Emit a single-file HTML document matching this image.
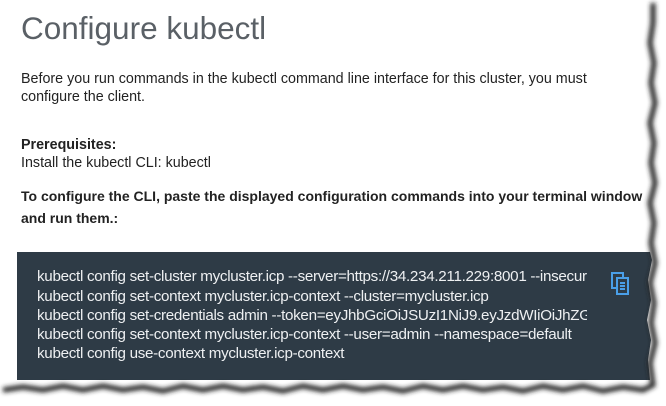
<!DOCTYPE html>
<html><head><style>
body{margin:0;width:666px;height:406px;background:#fff;position:relative;overflow:hidden;font-family:"Liberation Sans",sans-serif;}
.t{position:absolute;white-space:nowrap;color:#222;font-size:14.3px;}
h1{position:absolute;left:21px;top:10px;margin:0;font-weight:300;font-size:31.5px;color:#5a6066;}
.code{position:absolute;left:17px;top:252px;width:640px;height:128px;background:#2e3b46;}
.code div{position:absolute;left:20px;color:#eef0f2;font-size:15.2px;white-space:nowrap;letter-spacing:-0.3px;width:550px;overflow:hidden;}
</style></head><body>
<h1>Configure kubectl</h1>
<div class="t" style="left:21px;top:71px">Before you run commands in the kubectl command line interface for this cluster, you must</div>
<div class="t" style="left:21px;top:89px">configure the client.</div>
<div class="t" style="left:21px;top:137px;font-weight:bold">Prerequisites:</div>
<div class="t" style="left:21px;top:155px">Install the kubectl CLI: kubectl</div>
<div class="t" style="left:21px;top:188px;font-weight:bold;font-size:14px">To configure the CLI, paste the displayed configuration commands into your terminal window</div>
<div class="t" style="left:21px;top:210px;font-weight:bold;font-size:14px">and run them.:</div>
<div class="code">
<div style="top:16px">kubectl config set-cluster mycluster.icp --server=https://34.234.211.229:8001 --insecure-skip-tls-verify=true</div>
<div style="top:36px">kubectl config set-context mycluster.icp-context --cluster=mycluster.icp</div>
<div style="top:55px">kubectl config set-credentials admin --token=eyJhbGciOiJSUzI1NiJ9.eyJzdWIiOiJhZG1pbiIsImF0</div>
<div style="top:74px">kubectl config set-context mycluster.icp-context --user=admin --namespace=default</div>
<div style="top:93px">kubectl config use-context mycluster.icp-context</div>
<svg style="position:absolute;left:594px;top:20px" width="20" height="24" viewBox="0 0 20 24" fill="none" stroke="#4a9fe8" stroke-width="2"><rect x="1" y="1" width="11" height="15"/><rect x="6" y="6" width="11" height="16" fill="#2e3b46"/><path d="M9 11h5M9 14h5M9 17h5"/></svg>
</div>
<svg style="position:absolute;left:0;top:0" width="666" height="406">
<defs><filter id="s" x="-10%" y="-10%" width="120%" height="120%"><feGaussianBlur stdDeviation="2.5"/></filter></defs>
<path d="M649 0 L666 0 L666 406 L0 406 L0 384 L20 382 L40 385 L60 381 L80 384 L100 380 L120 385 L140 382 L160 386 L180 381 L200 384 L220 380 L240 385 L260 382 L280 386 L300 381 L320 384 L340 380 L360 385 L380 382 L400 386 L420 381 L440 384 L460 380 L480 385 L500 382 L520 386 L540 381 L560 384 L580 380 L600 385 L620 382 L640 385 L650 380 L648 360 L651 340 L647 320 L651 300 L648 280 L652 260 L647 240 L651 220 L648 200 L652 180 L647 160 L651 140 L648 120 L652 100 L647 80 L651 60 L648 40 L652 20 Z" fill="#fff"/>
<path d="M650 0 L650 20 L647 40 L651 60 L648 80 L652 100 L647 120 L651 140 L648 160 L652 180 L647 200 L651 220 L648 240 L652 260 L647 280 L651 300 L648 320 L652 340 L647 360 L650 382 L640 387 L620 384 L600 388 L580 383 L560 387 L540 383 L520 388 L500 384 L480 387 L460 383 L440 387 L420 383 L400 388 L380 384 L360 387 L340 383 L320 387 L300 383 L280 388 L260 384 L240 387 L220 383 L200 387 L180 383 L160 388 L140 384 L120 387 L100 383 L80 387 L60 383 L40 387 L20 384 L0 387" fill="none" stroke="#222" stroke-width="5" filter="url(#s)" transform="translate(3,3)"/>
</svg>
</body></html>
